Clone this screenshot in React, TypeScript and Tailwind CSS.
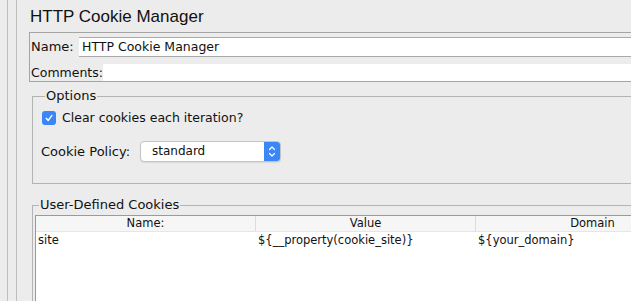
import React from 'react';

const font = { fontFamily: '"DejaVu Sans", "Liberation Sans", sans-serif' };
const titleFont = { fontFamily: '"Liberation Sans", Arial, sans-serif' };

const Checkbox = () => (
  <span className="w-[14px] h-[14px] rounded-[3px] bg-[#3a86f7] flex items-center justify-center shrink-0">
    <svg width="10" height="10" viewBox="0 0 10 10">
      <path d="M2.2 5.2 L4.2 7.5 L7.9 2.4" fill="none" stroke="#fff" strokeWidth="1.3" strokeLinecap="round" strokeLinejoin="round" />
    </svg>
  </span>
);

const Select = ({ value }: { value: string }) => (
  <div className="w-[141px] h-[21px] flex rounded-[4px] border border-[#c4c4c4] bg-white overflow-hidden shadow-[0_1px_1px_rgba(0,0,0,0.08)]">
    <div className="flex-1 pl-[11px] flex items-center text-[12px] text-[#111]">{value}</div>
    <div className="w-[16px] bg-[#3b87f5] flex items-center justify-center">
      <svg width="8" height="13" viewBox="0 0 8 13">
        <path d="M1.5 4.5 L4 2 L6.5 4.5 M1.5 8.5 L4 11 L6.5 8.5" fill="none" stroke="#fff" strokeWidth="1.2" strokeLinecap="round" strokeLinejoin="round" />
      </svg>
    </div>
  </div>
);

export default function App() {
  const columns = ['Name:', 'Value', 'Domain'];
  const rows = [['site', '${__property(cookie_site)}', '${your_domain}']];

  return (
    <div className="w-[631px] h-[301px] bg-[#ececec] flex overflow-hidden text-[#111]" style={font}>
      {/* Left gutter */}
      <div className="w-[7px] shrink-0" />
      <div className="w-px shrink-0 bg-[#a9c3e6]" />
      <div className="w-[8px] shrink-0" />
      <div className="w-px shrink-0 bg-[#bdbdbd]" />

      {/* Main panel */}
      <div className="w-[740px] shrink-0 pl-[12px]">
        <h1 className="text-[17px] leading-[22px] mt-[6px] ml-[1px] h-[26px]" style={titleFont}>HTTP Cookie Manager</h1>

        <div className="border border-[#a4a4a4] h-[50px] flex flex-col text-[13px]">
          <div className="flex items-center h-[20px] mt-[4px]">
            <span className="pl-[1px] w-[49px]">Name:</span>
            <div className="flex-1 h-[20px] bg-white border-t border-b border-[#a9a9a9] flex items-center pl-[3px] text-[12.5px]">HTTP Cookie Manager</div>
          </div>
          <div className="flex items-end flex-1 mt-[7px]">
            <span className="pl-[1px] w-[73px] leading-[17px] whitespace-nowrap text-[12.5px]">Comments:</span>
            <div className="flex-1 h-[17px] bg-white" />
          </div>
        </div>

        <fieldset className="ml-[3px] mt-[7px] border border-[#b4b4b4] h-[95px] pl-[8px] text-[13px]">
          <legend className="ml-[4px] px-[1px] leading-[14px]">Options</legend>
          <div className="flex items-center gap-[6px] mt-[6px] ml-[1px]">
            <Checkbox />
            <span className="text-[12.5px]">Clear cookies each iteration?</span>
          </div>
          <div className="flex items-center mt-[13px]">
            <span className="w-[99px]">Cookie Policy:</span>
            <Select value="standard" />
          </div>
        </fieldset>

        <fieldset className="ml-[3px] mt-[14px] border border-[#b4b4b4] h-[120px] pl-[2px] text-[13px]">
          <legend className="ml-[4px] px-[1px] leading-[14px]">User-Defined Cookies</legend>
          <div className="mt-[3px] border-t border-l border-[#9a9a9a] bg-white h-[100px] text-[11.5px]">
            <div className="flex h-[16px] bg-[#f6f6f6] border-b border-[#e6e6e6]">
              {columns.map((c, i) => (
                <div key={c} className={`flex items-center justify-center ${i < 2 ? 'w-[220px] border-r border-[#dcdcdc]' : 'w-[233px]'}`}>
                  {c}
                </div>
              ))}
            </div>
            {rows.map((r, ri) => (
              <div key={ri} className="flex h-[18px] items-center">
                {r.map((cell, ci) => (
                  <div key={ci} className="w-[220px] pl-[2px] whitespace-nowrap">{cell}</div>
                ))}
              </div>
            ))}
          </div>
        </fieldset>
      </div>
    </div>
  );
}
